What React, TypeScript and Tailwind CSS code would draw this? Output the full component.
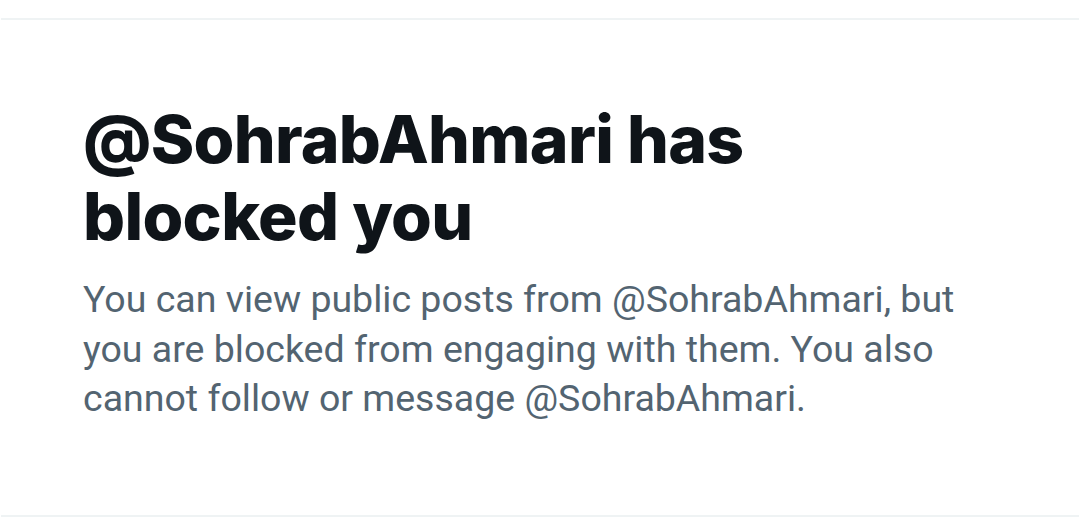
export default function App() {
  return (
    <div className="h-[525px] w-[1080px] bg-white pt-[18px]">
      <div className="mx-px h-[499px] border-y-2 border-[#eff3f4] pl-[82px] pr-[80px] pt-[81px]">
        <h1 className="max-w-[760px] font-['Inter',Arial,sans-serif] text-[66px] font-extrabold leading-[77px] tracking-[-0.7px] text-[#0f1419]">
          @SohrabAhmari has blocked you
        </h1>
        <p className="mt-[20px] w-[900px] font-['Roboto',Arial,sans-serif] text-[37.5px] leading-[49.5px] text-[#536471]">
          You can view public posts from @SohrabAhmari, but you are blocked from engaging with them. You also cannot
          follow or message @SohrabAhmari.
        </p>
      </div>
    </div>
  );
}
